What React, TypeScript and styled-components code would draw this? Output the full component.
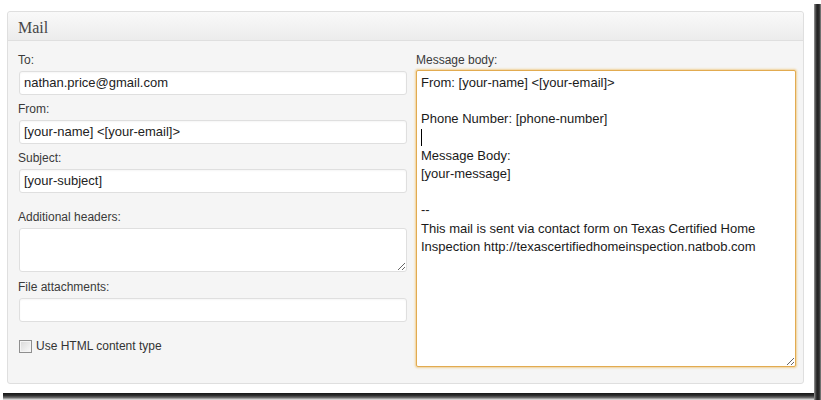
import React from "react";
import styled, { createGlobalStyle } from "styled-components";

const Global = createGlobalStyle`
  html, body { margin: 0; padding: 0; background: #ffffff; }
  body { font-family: "Liberation Sans", Arial, sans-serif; }
`;

const Shot = styled.div`
  width: 821px;
  height: 400px;
  background:
    linear-gradient(to right, #9a9a9a, #3a3a3a 30%, #1e1e1e 55%, #3c3c3c 80%, #8c8c8c)
      right 0 top 4px / 7px calc(100% - 4px) no-repeat,
    linear-gradient(to bottom, #161616, #2e2e2e 35%, #6a6a6a 65%, #b8b8b8 85%, #ececec)
      left 3px bottom 0 / calc(100% - 10px) 7px no-repeat,
    #ffffff;
`;

const Frame = styled.div`
  width: 814px;
  height: 393px;
  box-sizing: border-box;
  background: #ffffff;
  padding: 11px 0 0 7px;
`;

const Panel = styled.section`
  width: 797px;
  height: 373px;
  box-sizing: border-box;
  border: 1px solid #dfdfdf;
  border-radius: 3px;
  background: #f5f5f5;
  display: flex;
  flex-direction: column;
`;

const Header = styled.h3`
  margin: 0;
  height: 29px;
  box-sizing: border-box;
  border-bottom: 1px solid #dfdfdf;
  background: linear-gradient(to bottom, #f9f9f9, #ececec);
  font-family: Georgia, "Liberation Serif", serif;
  font-weight: normal;
  font-size: 16px;
  color: #464646;
  padding: 6px 0 0 10px;
  line-height: 20px;
  border-radius: 3px 3px 0 0;
`;

const Body = styled.div`
  display: grid;
  grid-template-columns: 389px 380px;
  column-gap: 9px;
  padding: 12px 0 0 10px;
`;

const Column = styled.div`
  display: flex;
  flex-direction: column;
`;

const Label = styled.label<{ $top?: number }>`
  display: block;
  font-size: 12px;
  line-height: 15px;
  color: #3a3a3a;
  margin-top: ${(p) => p.$top ?? 0}px;
  margin-bottom: 3px;
`;

const TextInput = styled.div`
  margin-left: 1px;
  width: 388px;
  height: 24px;
  box-sizing: border-box;
  border: 1px solid #dfdfdf;
  border-radius: 3px;
  background: #fff;
  box-shadow: inset 0 1px 2px rgba(0, 0, 0, 0.04);
  font-size: 13px;
  line-height: 22px;
  color: #222;
  padding: 0 4px;
  white-space: nowrap;
`;

const SmallArea = styled.textarea`
  margin-left: 1px;
  width: 388px;
  height: 44px;
  box-sizing: border-box;
  border: 1px solid #dfdfdf;
  border-radius: 3px;
  background: #fff;
  resize: vertical;
  font-family: "Liberation Sans", Arial, sans-serif;
  font-size: 13px;
  display: block;
  outline: none;
`;

const CheckRow = styled.div`
  display: flex;
  align-items: center;
  gap: 4px;
  margin-top: 17px;
  margin-left: 1px;
  font-size: 12px;
  color: #333;
`;

const Box = styled.span`
  width: 13px;
  height: 13px;
  box-sizing: border-box;
  border: 1px solid #8f8f8f;
  background: linear-gradient(135deg, #d8d8d8, #fafafa);
  box-shadow: inset 0 0 0 1px #f4f4f4;
`;

const MessageArea = styled.div`
  width: 380px;
  height: 297px;
  box-sizing: border-box;
  border: 1px solid #e2ab50;
  box-shadow: 0 0 2px 1px rgba(238, 196, 120, 0.75);
  border-radius: 2px;
  background: #fff;
  padding: 3px 4px;
  font-size: 13px;
  line-height: 18.2px;
  color: #1a1a1a;
  white-space: pre-wrap;
  overflow: auto;
  resize: vertical;
  margin-top: -1px;
`;

const Line = styled.div`
  min-height: 18.2px;
`;

const Caret = styled.span`
  display: inline-block;
  width: 1px;
  height: 17px;
  background: #000;
  vertical-align: top;
`;

const messageLines = [
  "From: [your-name] <[your-email]>",
  "",
  "Phone Number: [phone-number]",
  "|CARET|",
  "Message Body:",
  "[your-message]",
  "",
  "--",
  "This mail is sent via contact form on Texas Certified Home Inspection http://texascertifiedhomeinspection.natbob.com",
];

export default function App() {
  return (
    <>
      <Global />
      <Shot>
        <Frame>
          <Panel>
            <Header>Mail</Header>
            <Body>
              <Column>
                <Label>To:</Label>
                <TextInput>nathan.price@gmail.com</TextInput>
                <Label $top={7}>From:</Label>
                <TextInput>[your-name] &lt;[your-email]&gt;</TextInput>
                <Label $top={7}>Subject:</Label>
                <TextInput>[your-subject]</TextInput>
                <Label $top={17}>Additional headers:</Label>
                <SmallArea defaultValue="" />
                <Label $top={8}>File attachments:</Label>
                <TextInput />
                <CheckRow>
                  <Box />
                  <span>Use HTML content type</span>
                </CheckRow>
              </Column>
              <Column>
                <Label>Message body:</Label>
                <MessageArea>
                  {messageLines.map((l, i) => (
                    <Line key={i}>{l === "|CARET|" ? <Caret /> : l}</Line>
                  ))}
                </MessageArea>
              </Column>
            </Body>
          </Panel>
        </Frame>
      </Shot>
    </>
  );
}
